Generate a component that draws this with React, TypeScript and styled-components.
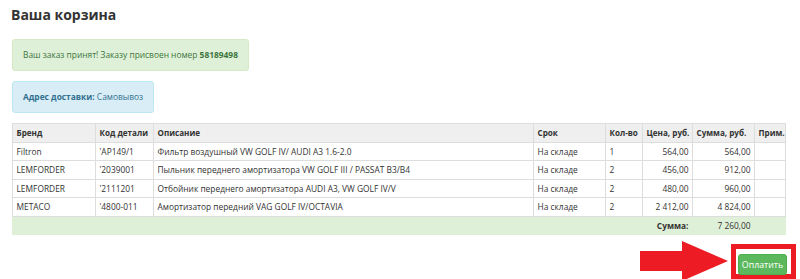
import React from 'react';
import styled, { createGlobalStyle } from 'styled-components';

const GlobalStyle = createGlobalStyle`
  body {
    margin: 0;
    background: #fff;
    font-family: "Open Sans", "DejaVu Sans", sans-serif;
    color: #333;
  }
`;

const Page = styled.div`
  padding: 0 14px 0 12px;
`;

const Title = styled.h2`
  margin: 0 0 0 -1px;
  padding: 5px 0 0 0;
  font-size: 14px;
  line-height: 20px;
  font-weight: 700;
  color: #333;
`;

const Alert = styled.div<{ $kind: 'success' | 'info' }>`
  display: inline-block;
  box-sizing: border-box;
  padding: 9px 10px;
  font-size: 8.4px;
  line-height: 12px;
  border-radius: 3px;
  white-space: nowrap;
  border: 1px solid ${(p) => (p.$kind === 'success' ? '#d6e9c6' : '#bce8f1')};
  background: ${(p) => (p.$kind === 'success' ? '#dff0d8' : '#d9edf7')};
  color: ${(p) => (p.$kind === 'success' ? '#3c763d' : '#31708f')};
  b {
    font-weight: 700;
  }
`;

const AlertRow = styled.div<{ $top: number }>`
  margin-top: ${(p) => p.$top}px;
  line-height: 0;
`;

const Table = styled.table`
  margin-top: 10px;
  width: 100%;
  table-layout: fixed;
  border-collapse: collapse;
  font-size: 8.4px;
  line-height: 11.5px;
  color: #333;
`;

const Col = styled.col<{ $w?: number }>`
  width: ${(p) => (p.$w ? `${p.$w}px` : 'auto')};
`;

const Th = styled.th`
  text-align: left;
  font-weight: 700;
  font-size: 8.1px;
  background: #efefef;
  border: 1px solid #ddd;
  padding: 3px 1px 3px 3.5px;
  white-space: nowrap;
`;

const Td = styled.td<{ $right?: boolean }>`
  border: 1px solid #ddd;
  padding: 3px 3.5px;
  white-space: nowrap;
  overflow: hidden;
  text-align: ${(p) => (p.$right ? 'right' : 'left')};
`;

const SumRow = styled.tr`
  background: #dff0d8;
  td {
    border-color: #dff0d8;
    border-top-color: #ddd;
  }
`;

const Footer = styled.div`
  display: flex;
  justify-content: flex-end;
  align-items: center;
  margin-top: 6px;
  margin-right: -10px;
`;

const Arrow = styled.svg`
  display: block;
  margin-right: 3px;
`;

const Highlight = styled.div`
  box-sizing: border-box;
  border: 5px solid #ed1c24;
  padding: 2px;
  width: 65px;
  height: 35px;
`;

const PayButton = styled.button`
  box-sizing: border-box;
  width: 49px;
  height: 21px;
  padding: 0;
  border: 1px solid #4cae4c;
  border-radius: 3px;
  background: #5cb85c;
  color: #fff;
  font-family: "Open Sans", "DejaVu Sans", sans-serif;
  font-size: 8.8px;
  cursor: pointer;
`;

const rows = [
  ['Filtron', "'AP149/1", 'Фильтр воздушный VW GOLF IV/ AUDI A3 1.6-2.0', 'На складе', '1', '564,00', '564,00'],
  ['LEMFORDER', "'2039001", 'Пыльник переднего амортизатора VW GOLF III / PASSAT B3/B4', 'На складе', '2', '456,00', '912,00'],
  ['LEMFORDER', "'2111201", 'Отбойник переднего амортизатора AUDI A3, VW GOLF IV/V', 'На складе', '2', '480,00', '960,00'],
  ['METACO', "'4800-011", 'Амортизатор передний VAG GOLF IV/OCTAVIA', 'На складе', '2', '2 412,00', '4 824,00'],
];

export default function App() {
  return (
    <Page>
      <GlobalStyle />
      <Title>Ваша корзина</Title>
      <AlertRow $top={14}>
        <Alert $kind="success">
          Ваш заказ принят! Заказу присвоен номер <b>58189498</b>
        </Alert>
      </AlertRow>
      <AlertRow $top={10}>
        <Alert $kind="info">
          <b>Адрес доставки:</b> Самовывоз
        </Alert>
      </AlertRow>
      <Table>
        <colgroup>
          <Col $w={83} />
          <Col $w={58} />
          <Col />
          <Col $w={72} />
          <Col $w={37} />
          <Col $w={50} />
          <Col $w={62} />
          <Col $w={31} />
        </colgroup>
        <thead>
          <tr>
            <Th>Бренд</Th>
            <Th>Код детали</Th>
            <Th>Описание</Th>
            <Th>Срок</Th>
            <Th>Кол-во</Th>
            <Th>Цена, руб.</Th>
            <Th>Сумма, руб.</Th>
            <Th>Прим.</Th>
          </tr>
        </thead>
        <tbody>
          {rows.map((r) => (
            <tr key={r[1]}>
              <Td>{r[0]}</Td>
              <Td>{r[1]}</Td>
              <Td>{r[2]}</Td>
              <Td>{r[3]}</Td>
              <Td>{r[4]}</Td>
              <Td $right>{r[5]}</Td>
              <Td $right>{r[6]}</Td>
              <Td />
            </tr>
          ))}
          <SumRow>
            <Td colSpan={5}>&nbsp;</Td>
            <Td $right>
              <b>Сумма:</b>
            </Td>
            <Td $right>7 260,00</Td>
            <Td />
          </SumRow>
        </tbody>
      </Table>
      <Footer>
        <Arrow width="88" height="40" viewBox="0 0 88 40">
          <polygon points="0,10 42,10 42,0 88,20 42,40 42,30 0,30" fill="#ed1c24" />
        </Arrow>
        <Highlight>
          <PayButton>Оплатить</PayButton>
        </Highlight>
      </Footer>
    </Page>
  );
}
